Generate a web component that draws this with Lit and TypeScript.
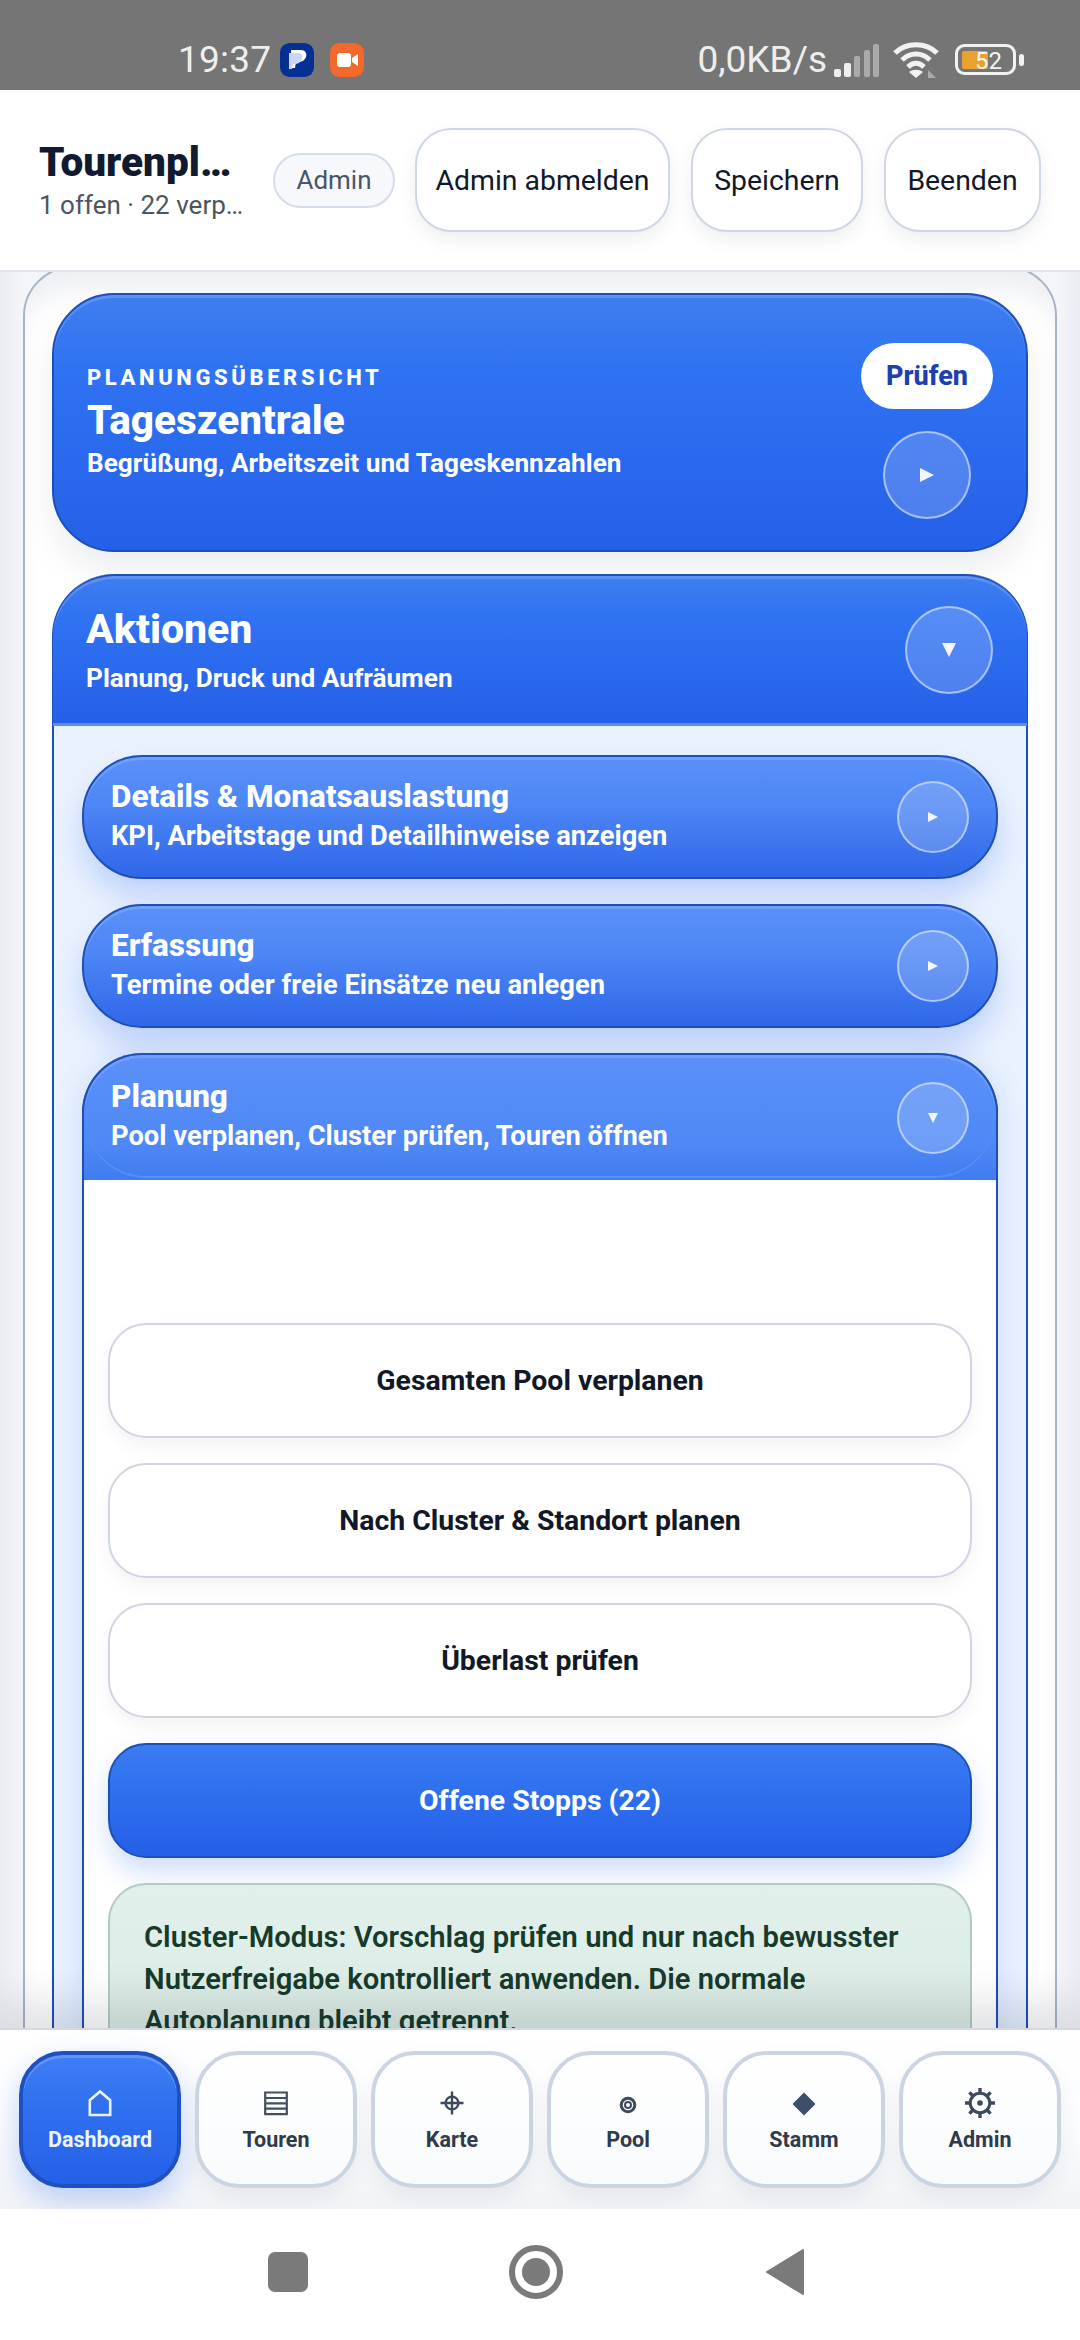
import { LitElement, html, css, svg } from "lit";
import { customElement } from "lit/decorators.js";

const ICONS: Record<string, any> = {
  home: svg`<path d="M3.8 25V10.2L14 1.5 24.2 10.2V25Z" fill="none" stroke="#eaf2ff" stroke-width="2.6"/>`,
  list: svg`<path d="M3.2 2.5h21.6v21.6H3.2Z M3.2 8h21.6M3.2 13.3h21.6M3.2 18.6h21.6" fill="none" stroke="#44505f" stroke-width="2.2"/>`,
  target: svg`<circle cx="14" cy="13" r="6.4" fill="none" stroke="#3d4a5c" stroke-width="2.4"/><path d="M14 1.5v23M2.5 13h23" stroke="#3d4a5c" stroke-width="2.4"/>`,
  pool: svg`<circle cx="14" cy="15" r="6.8" fill="none" stroke="#3d4a5c" stroke-width="3"/><circle cx="14" cy="15" r="3" fill="none" stroke="#3d4a5c" stroke-width="2"/>`,
  diamond: svg`<path d="M14 2.5 25.5 14 14 25.5 2.5 14Z" fill="#3d4e68"/>`,
  gear: svg`<circle cx="14" cy="13" r="9.8" fill="none" stroke="#3d4a5c" stroke-width="3"/><circle cx="14" cy="13" r="2.8" fill="#3d4a5c"/><path d="M14 -2v5M14 23v5M-1 13h5M24 13h5M3.4 2.4l3.4 3.4M21.2 20.2l3.4 3.4M24.6 2.4l-3.4 3.4M6.8 20.2l-3.4 3.4" stroke="#3d4a5c" stroke-width="3.4"/>`,
};

const NAV = [
  ["Dashboard", "home", true],
  ["Touren", "list", false],
  ["Karte", "target", false],
  ["Pool", "pool", false],
  ["Stamm", "diamond", false],
  ["Admin", "gear", false],
] as const;

@customElement("app-root")
export class AppRoot extends LitElement {
  static styles = css`
    :host { display: block; width: 1080px; height: 2340px; font-family: Roboto, "Liberation Sans", sans-serif; color: #111827; }
    * { box-sizing: border-box; }
    .page { width: 1080px; height: 2340px; display: flex; flex-direction: column; overflow: hidden; background: #fff; }

    .status { height: 90px; flex: none; background: #757575; color: #eeeeee; display: flex; align-items: center; padding: 29px 55px 0 178px; font-size: 37px; line-height: 42px; }
    .time { letter-spacing: .2px; }
    .appicon { width: 34px; height: 34px; border-radius: 9px; margin-left: 9px; display: block; }
    .appicon + .appicon { margin-left: 16px; }
    .status .right { margin-left: auto; display: flex; align-items: center; }
    .status svg { display: block; }
    .speed { margin-right: 7px; }

    .head { height: 182px; flex: none; position: relative; z-index: 3; background: #fff; border-bottom: 2px solid #dfe3ea; display: flex; align-items: center; gap: 20px; padding: 0 39px; }
    .head .who { flex: 1; min-width: 0; display: flex; flex-direction: column; padding-right: 8px; }
    .who b { font-size: 40.5px; line-height: 46px; font-weight: 900; color: #111a2e; white-space: nowrap; overflow: hidden; text-overflow: ellipsis; }
    .who span { font-size: 26px; line-height: 34px; color: #4b5563; white-space: nowrap; overflow: hidden; text-overflow: ellipsis; margin-top: 3px; }
    .chip { flex: none; width: 122px; height: 55px; border-radius: 28px; border: 2px solid #d5dcea; background: #f6f8fc; color: #475569; font-size: 26px; display: flex; align-items: center; justify-content: center; }
    .hbtn { flex: none; height: 104px; border-radius: 36px; border: 2px solid #cfd6e4; background: #fff; box-shadow: 0 8px 18px rgba(15,23,42,.07); font-size: 28.4px; color: #111827; display: flex; align-items: center; justify-content: center; }
    .hbtns { display: flex; gap: 21px; flex: none; }
    .w1 { width: 255px; } .w2 { width: 172px; } .w3 { width: 157px; }

    .main { flex: 1 1 0; min-height: 0; overflow: hidden; position: relative; padding: 0 23px; background: linear-gradient(90deg, #e9ecf1, #f3f5f9 2%, #f3f5f9 98%, #e9ecf1); }
    .card { margin-top: -6px; border: 2px solid #a7b3c6; border-radius: 50px; background: #fff; padding: 25px 27px; display: flex; flex-direction: column; gap: 22px; box-shadow: inset 0 30px 30px -10px #eceef2; }

    .blue { background: linear-gradient(#3f7ef0, #2f72f2 30%, #2560e8); border: 2px solid #1d4fb8; box-shadow: inset 0 3px 0 rgba(255,255,255,.16), 0 18px 34px rgba(15,23,42,.08); color: #fff; }
    .hero { height: 259px; border-radius: 62px; padding: 64px 33px 0; display: flex; justify-content: space-between; }
    .eyebrow { font-size: 22px; font-weight: 800; letter-spacing: 3.6px; line-height: 30px; margin-top: 4px; }
    .hero h2 { margin: 3px 0 0; font-size: 40.5px; line-height: 48px; font-weight: 800; }
    .hero p, .sect p { margin: 0; font-size: 26.2px; line-height: 36px; font-weight: 700; }
    .hero p { margin-top: 1px; }
    .side { display: flex; flex-direction: column; align-items: center; margin-top: -16px; gap: 22px; }
    .pill { width: 132px; height: 66px; border-radius: 33px; background: #fff; color: #1e40af; font-size: 27px; font-weight: 800; display: flex; align-items: center; justify-content: center; }
    .round { flex: none; border-radius: 50%; border: 2px solid rgba(255,255,255,.5); background: rgba(255,255,255,.18); display: flex; align-items: center; justify-content: center; }
    .r87 { width: 88px; height: 88px; }
    .r72 { width: 72px; height: 72px; }

    .sect { border: 2px solid #1d4fb8; border-radius: 62px 62px 0 0; background: #eaf2fe; border-top: 0; }
    .sect > .shead { height: 152px; border-radius: 62px 62px 0 0; border-width: 2px 0 0; border-style: solid; border-color: #1d4fb8; border-bottom: 3px solid #5b8ef0; display: flex; justify-content: space-between; align-items: center; padding: 0 34px 0 33px; margin: 0 -1px; box-shadow: inset 0 3px 0 rgba(255,255,255,.16); }
    .sect h2 { margin: 0 0 6px; font-size: 41px; line-height: 50px; font-weight: 800; }
    .sbody { padding: 29px 28px 0; display: flex; flex-direction: column; gap: 25px; }

    .sub { height: 124px; border-radius: 60px; padding: 0 27px; display: flex; justify-content: space-between; align-items: center; color: #fff; background: linear-gradient(#5a90f8, #4d86f5 40%, #2f67e8); border: 2px solid #1e4fb5; box-shadow: inset 0 3px 0 rgba(255,255,255,.14), 0 18px 30px rgba(59,110,240,.24); }
    .sub .txt { padding-bottom: 3px; }
    .sub h3 { margin: 0; font-size: 31.5px; line-height: 38px; font-weight: 800; }
    .sub p { margin: 2px 0 0; font-size: 27.3px; line-height: 36px; font-weight: 700; }

    .open { border: 2px solid #1e4fb5; border-top: 0; border-radius: 60px 60px 0 0; background: #fff; box-shadow: 0 0 30px rgba(59,110,240,.16); }
    .open .sub { height: 127px; margin: 0 -2px; border-radius: 60px 60px 0 0; background: linear-gradient(#5a90f8, #4f89f6 70%, #3f7cf0); box-shadow: inset 0 3px 0 rgba(255,255,255,.14); border-width: 2px 2px 0; position: relative; }
    .open .sub::after { content: ""; position: absolute; inset: 0 2px 2px; border-radius: 60px; border-bottom: 2px solid rgba(255,255,255,.12); pointer-events: none; }
    .list { padding: 143px 24px 0; display: flex; flex-direction: column; gap: 25px; }
    .act { height: 115px; border-radius: 38px; border: 2px solid #cfd5e3; background: #fff; box-shadow: 0 8px 18px rgba(15,23,42,.05); display: flex; align-items: center; justify-content: center; font-size: 28.4px; font-weight: 700; color: #111827; }
    .act.blue { background: linear-gradient(#3b7cf2, #2f70ef 40%, #2560e8); border-color: #1d4fb8; color: #fff; box-shadow: 0 14px 28px rgba(37,99,235,.22); }
    .note { border: 2px solid #b3cbc4; border-radius: 38px; padding: 31px 34px 60px; background: linear-gradient(#e1f0eb, #d8e9e1); color: #173a2b; font-size: 29.2px; line-height: 42px; font-weight: 600; }

    .nav { height: 181px; flex: none; position: relative; z-index: 2; border-top: 2px solid #d3d9e2; padding: 21px 19px 0; display: flex; gap: 14px; background: linear-gradient(#fff, #fbfcfe 55%, #f1f3f7); box-shadow: 0 -24px 40px rgba(15,23,42,.13); }
    .nb { width: 162px; height: 137px; flex: none; border-radius: 44px; border: 4px solid #cbd5e1; background: linear-gradient(#fff, #f8fafc); box-shadow: 0 10px 22px rgba(15,23,42,.06); display: flex; flex-direction: column; align-items: center; padding-top: 35px; color: #2f3a4a; font-size: 21.5px; font-weight: 700; }
    .nb svg { display: block; width: 28px; height: 28px; overflow: visible; }
    .nb span { line-height: 28px; margin-top: 8px; }
    .nb.on { border-color: #1f4fc0; background: linear-gradient(#3f7ef4, #2f70ef 40%, #2560e8); color: #eef5ff; box-shadow: inset 0 3px 0 rgba(255,255,255,.18), 0 12px 30px rgba(37,99,235,.28); }

    .sys { height: 131px; flex: none; position: relative; z-index: 2; background: #fff; display: flex; align-items: center; padding: 0 0 6px 268px; }
    .sys svg { display: block; }
  `;

  private tri(size: number, down = false) {
    const p = down ? `M0 0H${size}L${size / 2} ${size}Z` : `M0 0L${size} ${size / 2}L0 ${size}Z`;
    return html`<svg width=${size} height=${size} viewBox="0 0 ${size} ${size}"><path d=${p} fill="#f4f7ff"/></svg>`;
  }

  private sub(title: string, text: string, down = false) {
    return html`<div class="sub">
      <div class="txt"><h3>${title}</h3><p>${text}</p></div>
      <div class="round r72">${this.tri(10, down)}</div>
    </div>`;
  }

  render() {
    return html`<div class="page">
      <div class="status">
        <span class="time">19:37</span>
        <svg class="appicon" viewBox="0 0 34 34"><rect width="34" height="34" rx="9" fill="#062f93"/><path d="M11 7h10c5 0 6 4 5 7s-4 5-8 5h-2l-1 6h-4Z" fill="#fff"/><path d="M9 10h9c4 0 5 3 4 6s-4 5-7 5h-2l-1 5H9Z" fill="#c9d6f7"/></svg>
        <svg class="appicon" viewBox="0 0 34 34"><rect width="34" height="34" rx="9" fill="#f4682c"/><rect x="7" y="10" width="14" height="14" rx="3" fill="#fff"/><path d="M22 15l6-4v12l-6-4Z" fill="#fff"/></svg>
        <div class="right">
          <span class="speed">0,0KB/s</span>
          <svg width="46" height="36" viewBox="0 0 46 36"><rect x="0" y="27" width="7" height="8" rx="2" fill="#eee"/><rect x="10" y="21" width="7" height="14" rx="2" fill="#eee"/><rect x="20" y="14" width="6" height="21" rx="2" fill="#aaa"/><rect x="30" y="8" width="6" height="27" rx="2" fill="#aaa"/><rect x="39" y="2" width="6" height="33" rx="2" fill="#aaa"/></svg>
          <svg style="margin-left:12px" width="50" height="38" viewBox="0 0 50 38"><path d="M3 12C14 1 34 1 45 12M10 19C18 11 30 11 38 19M16 26C21 21 27 21 32 26" fill="none" stroke="#f2f2f2" stroke-width="5"/><path d="M24 37l-7-6c4-3 10-3 14 0Z" fill="#f2f2f2"/><path d="M36 37v-8l8 8Z" fill="#aaa"/></svg>
          <svg style="margin-left:13px" width="70" height="32" viewBox="0 0 70 32"><rect x="1.5" y="1.5" width="58" height="28" rx="8" fill="none" stroke="#f2f2f2" stroke-width="3"/><rect x="7" y="7" width="26" height="18" rx="2" fill="#e8a22d"/><text x="20" y="25" font-size="24" font-family="Roboto" fill="#f4f4f4">52</text><rect x="64" y="10" width="5" height="12" rx="2.5" fill="#f2f2f2"/></svg>
        </div>
      </div>

      <header class="head">
        <div class="who"><b>Tourenplanung</b><span>1 offen · 22 verplant</span></div>
        <div class="chip">Admin</div>
        <div class="hbtns">
          <div class="hbtn w1">Admin abmelden</div>
          <div class="hbtn w2">Speichern</div>
          <div class="hbtn w3">Beenden</div>
        </div>
      </header>

      <main class="main">
        <div class="card">
          <section class="hero blue">
            <div>
              <div class="eyebrow">PLANUNGSÜBERSICHT</div>
              <h2>Tageszentrale</h2>
              <p>Begrüßung, Arbeitszeit und Tageskennzahlen</p>
            </div>
            <div class="side">
              <div class="pill">Prüfen</div>
              <div class="round r87">${this.tri(14)}</div>
            </div>
          </section>

          <section class="sect">
            <div class="shead blue">
              <div><h2>Aktionen</h2><p>Planung, Druck und Aufräumen</p></div>
              <div class="round r87">${this.tri(14, true)}</div>
            </div>
            <div class="sbody">
              ${this.sub("Details & Monatsauslastung", "KPI, Arbeitstage und Detailhinweise anzeigen")}
              ${this.sub("Erfassung", "Termine oder freie Einsätze neu anlegen")}
              <div class="open">
                ${this.sub("Planung", "Pool verplanen, Cluster prüfen, Touren öffnen", true)}
                <div class="list">
                  <div class="act">Gesamten Pool verplanen</div>
                  <div class="act">Nach Cluster &amp; Standort planen</div>
                  <div class="act">Überlast prüfen</div>
                  <div class="act blue">Offene Stopps (22)</div>
                  <div class="note">Cluster-Modus: Vorschlag prüfen und nur nach bewusster Nutzerfreigabe kontrolliert anwenden. Die normale Autoplanung bleibt getrennt.</div>
                </div>
              </div>
            </div>
          </section>
        </div>
      </main>

      <nav class="nav">
        ${NAV.map(([label, icon, on]) => html`<div class="nb ${on ? "on" : ""}">
          <svg viewBox="0 0 28 28">${ICONS[icon]}</svg><span>${label}</span>
        </div>`)}
      </nav>

      <div class="sys">
        <svg width="540" height="56" viewBox="0 0 540 56">
          <rect x="0" y="8" width="40" height="40" rx="7" fill="#7a7a7a"/>
          <circle cx="268" cy="28" r="24" fill="none" stroke="#7a7a7a" stroke-width="6"/>
          <circle cx="268" cy="28" r="14" fill="#7a7a7a"/>
          <path d="M535 6V50L499 28Z" fill="#7a7a7a" stroke="#7a7a7a" stroke-width="2" stroke-linejoin="round"/>
        </svg>
      </div>
    </div>`;
  }
}
